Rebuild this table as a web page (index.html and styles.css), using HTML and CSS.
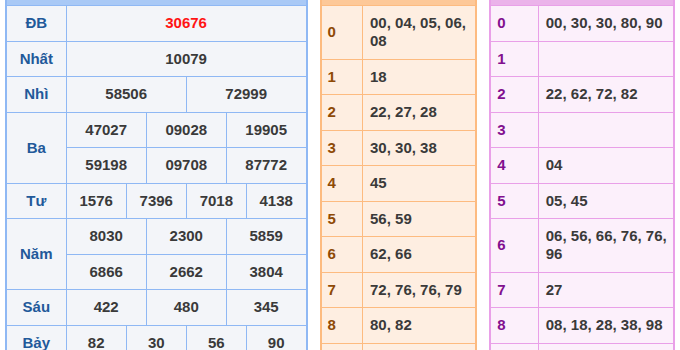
FILE: index.html
```html
<!DOCTYPE html>
<html lang="vi">
<head>
<meta charset="utf-8">
<title>Kết quả xổ số</title>
<link rel="stylesheet" href="styles.css">
</head>
<body>
<div class="board">
  <table class="kq">
    <colgroup><col class="c-label"><col class="c-num" span="12"></colgroup>
    <thead><tr><th colspan="13" class="head"></th></tr></thead>
    <tbody>
      <tr><th>ĐB</th><td colspan="12" class="db">30676</td></tr>
      <tr><th>Nhất</th><td colspan="12">10079</td></tr>
      <tr><th>Nhì</th><td colspan="6">58506</td><td colspan="6">72999</td></tr>
      <tr><th rowspan="2">Ba</th><td colspan="4">47027</td><td colspan="4">09028</td><td colspan="4">19905</td></tr>
      <tr><td colspan="4">59198</td><td colspan="4">09708</td><td colspan="4">87772</td></tr>
      <tr><th>Tư</th><td colspan="3">1576</td><td colspan="3">7396</td><td colspan="3">7018</td><td colspan="3">4138</td></tr>
      <tr><th rowspan="2">Năm</th><td colspan="4">8030</td><td colspan="4">2300</td><td colspan="4">5859</td></tr>
      <tr><td colspan="4">6866</td><td colspan="4">2662</td><td colspan="4">3804</td></tr>
      <tr><th>Sáu</th><td colspan="4">422</td><td colspan="4">480</td><td colspan="4">345</td></tr>
      <tr><th>Bảy</th><td colspan="3">82</td><td colspan="3">30</td><td colspan="3">56</td><td colspan="3">90</td></tr>
    </tbody>
  </table>

  <table class="loto dau">
    <colgroup><col class="c-key"><col></colgroup>
    <thead><tr><th colspan="2" class="head"></th></tr></thead>
    <tbody>
      <tr><th>0</th><td>00, 04, 05, 06, 08</td></tr>
      <tr><th>1</th><td>18</td></tr>
      <tr><th>2</th><td>22, 27, 28</td></tr>
      <tr><th>3</th><td>30, 30, 38</td></tr>
      <tr><th>4</th><td>45</td></tr>
      <tr><th>5</th><td>56, 59</td></tr>
      <tr><th>6</th><td>62, 66</td></tr>
      <tr><th>7</th><td>72, 76, 76, 79</td></tr>
      <tr><th>8</th><td>80, 82</td></tr>
      <tr><th>9</th><td>90, 96, 98</td></tr>
    </tbody>
  </table>

  <table class="loto duoi">
    <colgroup><col class="c-key"><col></colgroup>
    <thead><tr><th colspan="2" class="head"></th></tr></thead>
    <tbody>
      <tr><th>0</th><td>00, 30, 30, 80, 90</td></tr>
      <tr><th>1</th><td></td></tr>
      <tr><th>2</th><td>22, 62, 72, 82</td></tr>
      <tr><th>3</th><td></td></tr>
      <tr><th>4</th><td>04</td></tr>
      <tr><th>5</th><td>05, 45</td></tr>
      <tr><th>6</th><td>06, 56, 66, 76, 76, 96</td></tr>
      <tr><th>7</th><td>27</td></tr>
      <tr><th>8</th><td>08, 18, 28, 38, 98</td></tr>
      <tr><th>9</th><td>59, 79</td></tr>
    </tbody>
  </table>
</div>
</body>
</html>
```

FILE: styles.css
```css
html, body {
  margin: 0;
  padding: 0;
  background: #ffffff;
}

body {
  font-family: "Liberation Sans", Arial, sans-serif;
  font-size: 15px;
  line-height: 18px;
  color: #3a3a3a;
  overflow: hidden;
}

.board {
  display: flex;
  align-items: flex-start;
  gap: 12px;
  padding: 0 5px;
  margin-top: -31.5px;
}

table {
  border-collapse: collapse;
  table-layout: fixed;
}

th, td {
  padding: 8.25px 4px;
  font-weight: bold;
  vertical-align: middle;
}

th.head {
  height: 18px;
}

/* ---------- kết quả ---------- */
.kq {
  width: 303px;
  border: 2px solid #8fb8f4;
  background: #f3f5f9;
}
.kq .c-label { width: 60px; }
.kq .c-num { width: 20px; }
.kq th, .kq td {
  border: 1px solid #8fb8f4;
  text-align: center;
}
.kq tbody th { color: #22599a; }
.kq th.head { background: #a9c9f6; }
.kq td.db { color: #ff1414; }

/* ---------- lô tô ---------- */
.loto .c-key { width: 42px; }
.loto th, .loto td { text-align: left; }
.loto tbody th { padding-left: 6px; }
.loto td { padding-left: 7px; padding-right: 4px; }

.dau {
  width: 158px;
  border: 2px solid #fdbb80;
  background: #feeee1;
}
.dau th, .dau td { border: 1px solid #fdbb80; }
.dau th.head { background: #fdc898; }
.dau tbody th { color: #8f4a06; }

.duoi {
  width: 186px;
  border: 2px solid #e9a0e8;
  background: #fcf0fb;
}
.duoi .c-key { width: 48px; }
.duoi th, .duoi td { border: 1px solid #e9a0e8; }
.duoi th.head { background: #ebb3ea; }
.duoi tbody th { color: #82118f; }
```
